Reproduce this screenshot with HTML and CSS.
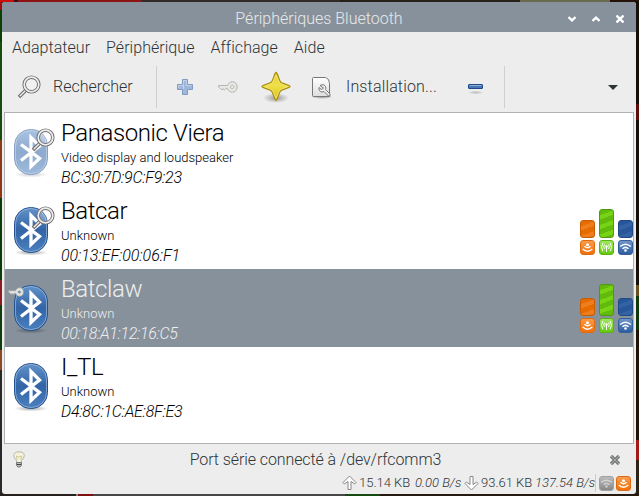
FILE: index.html
```
<!DOCTYPE html>
<html lang="fr">
<head>
<meta charset="utf-8">
<title>Périphériques Bluetooth</title>
<link rel="stylesheet" href="styles.css">
</head>
<body>
<svg class="defs" width="0" height="0" aria-hidden="true">
  <defs>
    <linearGradient id="blue" x1="0" y1="0" x2="0" y2="1"><stop offset="0" stop-color="#6393c9"/><stop offset=".5" stop-color="#3264a6"/><stop offset="1" stop-color="#4c80bd"/></linearGradient>
    <linearGradient id="gold" x1="0" y1="0" x2="0" y2="1"><stop offset="0" stop-color="#e4cc2b"/><stop offset=".45" stop-color="#efe04c"/><stop offset="1" stop-color="#d8bd10"/></linearGradient>
    <radialGradient id="shade"><stop offset="0" stop-color="#000" stop-opacity=".35"/><stop offset="1" stop-color="#000" stop-opacity="0"/></radialGradient>
    <linearGradient id="paper" x1="0" y1="0" x2="0" y2="1"><stop offset="0" stop-color="#fff"/><stop offset="1" stop-color="#ddd"/></linearGradient>
    <symbol id="bt" viewBox="0 0 36 50">
      <ellipse cx="18" cy="45.5" rx="17" ry="3" fill="url(#shade)"/>
      <rect x="1.5" y=".5" width="33" height="45" rx="16" fill="url(#blue)" stroke="#23508f"/>
      <rect x="2.5" y="1.5" width="31" height="43" rx="15" fill="none" stroke="#a3c0e0" stroke-opacity=".65"/>
      <path d="M8 15.5 26.500 29.500 18 37.500V8.500L26.500 17 8 31.500" fill="none" stroke="#fff" stroke-width="3.300"/>
    </symbol>
    <symbol id="lens" viewBox="0 0 24 24">
      <path d="M2 22 9.500 14.500" stroke="#666" stroke-width="3.600"/>
      <path d="M2.700 21.300 9.500 14.500" stroke="#eee" stroke-width="1.500"/>
      <circle cx="14.500" cy="9.500" r="7.300" fill="#fff" fill-opacity=".25" stroke="#707070" stroke-width="3.600"/>
      <circle cx="14.500" cy="9.500" r="7.300" fill="none" stroke="#eee" stroke-width="1.700"/>
    </symbol>
    <symbol id="key" viewBox="0 0 20 12">
      <path fill-rule="evenodd" d="M.5 4.500h9C10.500 2 12 .8 14.500.8a4.700 5.200 0 0 1 0 10.400c-2.500 0-4-1.200-5-3.700H8L6.500 9 5 7.700 4 9 2.500 7.500.5 6Zm13.700-.2a1.700 1.700 0 1 0 .1 0Z" fill="#e6e6e2" stroke="#a7a7a3"/>
    </symbol>
    <symbol id="wave-down" viewBox="0 0 13 13"><circle cx="6.500" cy="3.800" r="1.500" fill="#fff"/><path d="M3.500 5.200q3 3.200 6 0M1.700 8q4.800 4.400 9.600 0" fill="none" stroke="#fff" stroke-width="1.400"/></symbol>
    <symbol id="wave-side" viewBox="0 0 13 13"><circle cx="6.500" cy="5.500" r="1.200" fill="#fff"/><path d="M6.500 6v5M4.500 3.500q-1.500 2.300 0 4.600M8.500 3.500q1.500 2.300 0 4.600M2.900 2q-2.800 4.200 0 8.400M10.100 2q2.800 4.200 0 8.400" fill="none" stroke="#fff"/></symbol>
    <symbol id="wave-up" viewBox="0 0 13 13"><path d="M1.200 5.500q5.300-4.600 10.600 0M3.500 7.800q3-2.800 6 0" fill="none" stroke="#fff" stroke-width="1.500"/><circle cx="6.500" cy="9.500" r="1.300" fill="#fff"/></symbol>
    <symbol id="arrow" viewBox="0 0 15 16"><path d="M7.500 1 14 7.500 12.700 9 9 6.500v8H6v-8L2.300 9 1 7.500Z" fill="#fff" stroke="#888"/></symbol>
  </defs>
</svg>
<main class="window">
  <header class="titlebar">
    <h1>Périphériques Bluetooth</h1>
    <div class="controls">
      <svg width="8" height="8" viewBox="0 0 8 8"><path d="M.5 2 4 5.300 7.500 2"/></svg>
      <svg width="8" height="8" viewBox="0 0 8 8"><path d="M.5 6 4 2.700 7.500 6"/></svg>
      <svg width="8" height="8" viewBox="0 0 8 8"><path d="m.5.5 7 7m0-7-7 7"/></svg>
    </div>
  </header>
  <nav class="menu"><span>Adaptateur</span><span>Périphérique</span><span>Affichage</span><span>Aide</span></nav>
  <div class="toolbar">
    <div class="tool search"><svg width="24" height="24"><use href="#lens"/></svg><span>Rechercher</span></div>
    <i class="rule"></i>
    <div class="tool plus"><svg width="16" height="16" viewBox="0 0 16 16"><path d="M5.500.5h5v5h5v5h-5v5h-5v-5h-5v-5h5Z" fill="#9eb7da" stroke="#7f9bc4"/><path d="M6.500 10V1.500h3v5h5M1.500 9V6.500h5" fill="none" stroke="#c1d2e9"/></svg></div>
    <div class="tool bond"><svg width="20" height="12"><use href="#key"/></svg></div>
    <div class="tool trust"><svg width="32" height="32" viewBox="0 0 32 32"><ellipse cx="16" cy="27" rx="13" ry="5" fill="url(#shade)"/><path d="M16 1.500C17.500 1.500 19 9 20.500 11S30 14 30 15.500 22.500 18 20.500 20 17.500 29.500 16 29.500 13.500 22 11.500 20 2 17 2 15.500 9.500 13 11.500 11 14.500 1.500 16 1.500Z" fill="url(#gold)" stroke="#a8900e" stroke-width="1.300"/><path d="m16 4 3.700 7.800 7.500 3.700-7.500 3.700L16 27l-3.700-7.800-7.500-3.700 7.500-3.700Z" fill="none" stroke="#f6ef95" stroke-opacity=".6"/></svg></div>
    <div class="tool setup"><svg width="22" height="23" viewBox="0 0 22 23"><ellipse cx="11" cy="21" rx="11" ry="2" fill="url(#shade)"/><path d="M2.500 1.500h12q4 1 4 6v13h-16a1 1 0 0 1-1-1v-17a1 1 0 0 1 1-1Z" fill="url(#paper)" stroke="#777"/><path d="M9 9.500q4-2 5.500 1 .8 2 0 3l4.500 4.500q1 2-1.500 2L13 15.500q-4 1.500-5-2v-2l2.500 2 2-1.500Z" fill="#eee" stroke="#777"/></svg><span>Installation...</span></div>
    <div class="tool minus"><svg width="17" height="12" viewBox="0 0 17 12"><ellipse cx="8.500" cy="9.500" rx="8" ry="2" fill="url(#shade)" opacity=".6"/><rect x="1.500" y="1.500" width="14" height="4" rx=".5" fill="#4776b3" stroke="#204a87"/><path d="M2.500 2.500h12" stroke="#8fb1d8"/></svg></div>
    <i class="rule end"></i>
    <div class="tool drop"><svg width="10" height="5" viewBox="0 0 10 5"><path d="M0 0h10L5 5Z" fill="#2e3436"/></svg></div>
  </div>
  <ul class="devices">
    <li class="device">
      <div class="icon"><svg class="faded" width="36" height="50"><use href="#bt"/></svg><svg class="found" width="24" height="24"><use href="#lens"/></svg></div>
      <div class="info"><h2 class="long">Panasonic Viera</h2><p class="kind">Video display and loudspeaker</p><p class="address">BC:30:7D:9C:F9:23</p></div>
    </li>
    <li class="device">
      <div class="icon"><svg width="36" height="50"><use href="#bt"/></svg><svg class="found" width="24" height="24"><use href="#lens"/></svg></div>
      <div class="info"><h2>Batcar</h2><p class="kind">Unknown</p><p class="address even">00:13:EF:00:06:F1</p></div>
      <div class="levels">
        <div class="level orange"><i class="bar"></i><span class="badge"><svg width="13" height="13"><use href="#wave-down"/></svg></span></div>
        <div class="level green"><i class="bar high"></i><span class="badge"><svg width="13" height="13"><use href="#wave-side"/></svg></span></div>
        <div class="level blue"><i class="bar"></i><span class="badge"><svg width="13" height="13"><use href="#wave-up"/></svg></span></div>
      </div>
    </li>
    <li class="device selected">
      <div class="icon"><svg width="36" height="50"><use href="#bt"/></svg><svg class="paired" width="16" height="10"><use href="#key"/></svg></div>
      <div class="info"><h2 class="long">Batclaw</h2><p class="kind">Unknown</p><p class="address tight">00:18:A1:12:16:C5</p></div>
      <div class="levels">
        <div class="level orange"><i class="bar"></i><span class="badge"><svg width="13" height="13"><use href="#wave-down"/></svg></span></div>
        <div class="level green"><i class="bar full"></i><span class="badge"><svg width="13" height="13"><use href="#wave-side"/></svg></span></div>
        <div class="level blue"><i class="bar"></i><span class="badge"><svg width="13" height="13"><use href="#wave-up"/></svg></span></div>
      </div>
    </li>
    <li class="device">
      <div class="icon"><svg width="36" height="50"><use href="#bt"/></svg></div>
      <div class="info"><h2 class="long">I_TL</h2><p class="kind">Unknown</p><p class="address">D4:8C:1C:AE:8F:E3</p></div>
    </li>
  </ul>
  <div class="message">
    <svg width="12" height="17" viewBox="0 0 12 17"><path d="M3.500 9.500Q.7 7 .7 4.500.8.8 6 .8t5.300 3.700q0 2.500-2.800 5v2h-5Z" fill="#f4f2d8" stroke="#b5b5b0"/><path d="M4 9 3.500 5l2.500 1 2.500-1L8 9" fill="none" stroke="#d0ca98"/><path d="M3.500 11.500h5v3L7 16H5l-1.500-1.500Z" fill="#bbb" stroke="#777"/><path d="M4 13.500h4" stroke="#444"/></svg>
    <p>Port série connecté à /dev/rfcomm3</p>
    <svg width="12" height="12" viewBox="0 0 12 12"><path d="m2 2 8 8m0-8-8 8" stroke="#777b79" stroke-width="3.400"/><path d="m2 2 8 8m0-8-8 8" stroke="#a6a8a6"/></svg>
  </div>
  <footer class="status">
    <svg width="15" height="16"><use href="#arrow"/></svg><span class="total">15.14 KB</span><em class="up">0.00 B/s</em>
    <svg class="flip" width="15" height="16"><use href="#arrow"/></svg><span class="total second">93.61 KB</span><em class="down">137.54 B/s</em>
    <i class="divider"></i>
    <span class="badge grey"><svg width="13" height="13"><use href="#wave-up"/></svg></span>
    <span class="badge active"><svg width="13" height="13"><use href="#wave-down"/></svg></span>
  </footer>
</main>
</body>
</html>
```
FILE: styles.css
```
* { box-sizing: border-box; }
body {
  margin: 0; padding: 2px 3px 2px 2px; width: 639px; height: 496px; overflow: hidden;
  font: 300 16px/20px Roboto, "Liberation Sans", sans-serif; color: #2e3436;
  background:
    linear-gradient(90deg, #d00b0b 0 14px, #391212 14px 18px, #8c1414 18px 142px, #302b28 142px 340px, #262018 340px 520px, #696b4d 520px 610px, #241109 610px) top / 100% 2px no-repeat,
    linear-gradient(90deg, #24211f 0 76px, #858585 76px 78px, #7d1010 78px 93px, #474747 93px 345px, #174a11 345px 380px, #261910 380px) bottom / 100% 3px no-repeat,
    linear-gradient(#a30b0b 0 10px, #084006 10px 42px, #174e0b 42px 140px, #8c3a18 140px 198px, #0b3d08 198px 280px, #8c1b25 280px 305px, #103c10 305px 350px, #8c4926 350px 370px, #292929 370px) left / 2px 100% no-repeat,
    linear-gradient(#160e09 0 104px, #5c0d0a 104px 120px, #160e09 120px 285px, #6b501f 285px 296px, #10380c 296px 330px, #1e1209 330px 440px, #a31913 440px 460px, #2b2218 460px);
}
h1, h2, p, ul { margin: 0; padding: 0; font-weight: 300; }
svg { display: block; flex: none; }
.defs { position: absolute; }
.window { width: 634px; height: 492px; border-radius: 3px; overflow: hidden; background: #ededed; display: flex; flex-direction: column; }
.titlebar { height: 30px; background: #87919b; color: #e7e9eb; display: grid; grid-template-columns: 1fr auto 1fr; align-items: center; }
.titlebar h1 { grid-column: 2; font-size: 16px; line-height: 30px; padding-top: 2px; }
.controls { justify-self: end; display: flex; gap: 16px; padding-right: 12px; padding-top: 1px; }
.controls path { fill: none; stroke: #fff; stroke-width: 2.4; }
.menu { height: 32px; display: flex; gap: 16px; padding: 6px 10px 0; letter-spacing: .04px; }
.toolbar { height: 48px; display: flex; align-items: center; padding-bottom: 2px; }
.tool { display: flex; align-items: center; }
.search { width: 154px; padding-left: 15px; gap: 12px; }
.rule { width: 1px; height: 42px; background: #cfcfcf; }
.plus { margin-left: 20px; }
.bond { margin-left: 25px; opacity: .8; }
.trust { margin-left: 22px; }
.setup { margin-left: 19px; gap: 13px; width: 156px; letter-spacing: .15px; }
.minus { margin-top: 3px; }
.end { margin-left: 20px; }
.drop { margin-left: 103px; }
.devices { list-style: none; margin: 0 2px; height: 332px; border: 1px solid #b2b2b2; background: #fff; color: #000; }
.device { height: 78px; display: flex; }
.icon { position: relative; width: 56px; padding: 16px 0 0 8px; }
.faded { opacity: .55; }
.found { position: absolute; left: 26px; top: 15px; }
.paired { position: absolute; left: 3px; top: 18px; }
.info { padding-top: 5px; flex: 1; }
.info h2 { font-size: 24px; line-height: 30px; height: 31px; letter-spacing: -.4px; }
.kind { font-size: 13px; line-height: 18px; height: 18px; }
.address { font-size: 16px; font-style: italic; line-height: 22px; letter-spacing: -.28px; }
.even { letter-spacing: -.08px; }
.tight { letter-spacing: -.36px; }
.selected { background: #87919b; color: #eee; }
.levels { display: flex; gap: 4px; align-items: flex-end; height: 64px; }
.level { width: 15px; display: flex; flex-direction: column; gap: 2px; }
.bar { display: block; height: 18px; border-radius: 3px; border: 1px solid; }
.high { height: 29px; }
.full { height: 32px; }
.orange .bar { border-color: #c95b00; background: repeating-linear-gradient(160deg, #e66c00 0 5px, #ef7d1c 5px 9px); }
.green .bar { border-color: #4a9c0a; background: repeating-linear-gradient(160deg, #62bb0c 0 5px, #76d415 5px 9px); }
.blue .bar { border-color: #204a87; background: repeating-linear-gradient(160deg, #28569a 0 5px, #3462a2 5px 9px); }
.badge { display: block; flex: none; width: 15px; height: 15px; border-radius: 3px; border: 1px solid; }
.orange .badge, .active { background: linear-gradient(#fa9b4b, #f17008); border-color: #df6b10; }
.green .badge { background: linear-gradient(#a0e663, #65c80d); border-color: #5bb411; }
.blue .badge { background: linear-gradient(#7095c7, #2d5da0); border-color: #335f9d; }
.grey { background: linear-gradient(#bbb, #888); border-color: #a1a1a1; }
.grey svg { opacity: .5; }
.message { height: 30px; display: flex; align-items: center; padding: 1px 15px 0 11px; }
.message p { flex: 1; text-align: center; padding-right: 3px; letter-spacing: -.09px; }
.status { height: 20px; display: flex; align-items: center; padding-right: 5px; padding-bottom: 2px; justify-content: flex-end; font-size: 13px; line-height: 18px; white-space: nowrap; }
.total { margin-left: 2px; width: 56px; }
.second { width: 54px; }
.up { width: 49px; }
.down { width: 60px; }
.flip { transform: scaleY(-1); }
.divider { width: 1px; height: 18px; background: #ccc; margin-right: 3px; }
.active { margin-left: 2px; }
```
